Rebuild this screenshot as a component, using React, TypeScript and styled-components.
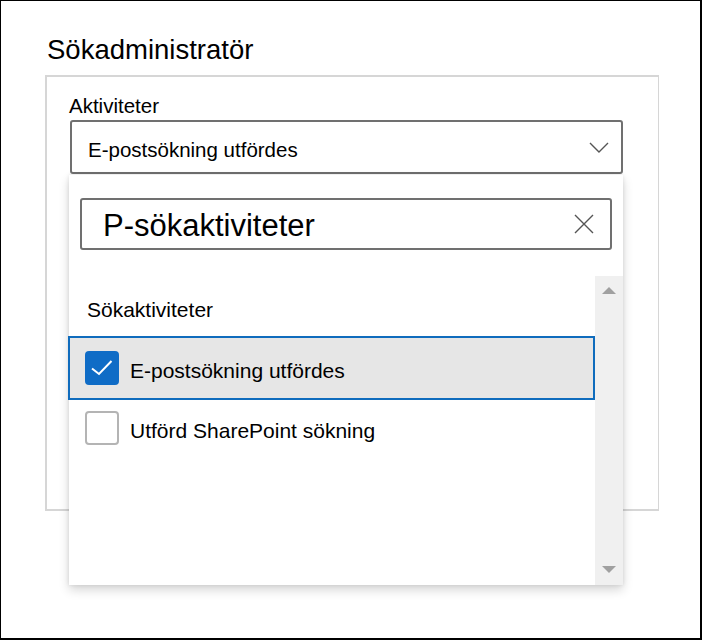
import React from 'react';
import styled, { createGlobalStyle } from 'styled-components';

const GlobalStyle = createGlobalStyle`
  body {
    margin: 0;
    background: #fff;
    font-family: "Liberation Sans", Arial, sans-serif;
    color: #111;
  }
`;

const items = [
  { label: 'E-postsökning utfördes', checked: true },
  { label: 'Utförd SharePoint sökning', checked: false },
];

export default function App() {
  return (
    <>
      <GlobalStyle />
      <Frame>
        <Title>Sökadministratör</Title>
        <Panel>
          <FieldLabel>Aktiviteter</FieldLabel>
          <DropdownWrap>
            <Dropdown>
              <DropdownText>E-postsökning utfördes</DropdownText>
              <svg width="20" height="11" viewBox="0 0 20 11">
                <polyline points="1,1 10,10 19,1" fill="none" stroke="#555" strokeWidth="1.4" />
              </svg>
            </Dropdown>
            <Callout>
              <SearchBox>
                <SearchText>P-sökaktiviteter</SearchText>
                <svg width="20" height="20" viewBox="0 0 20 20">
                  <path d="M1 1 L19 19 M19 1 L1 19" stroke="#555" strokeWidth="1.4" fill="none" />
                </svg>
              </SearchBox>
              <ListArea>
                <List>
                  <GroupHeader>Sökaktiviteter</GroupHeader>
                  {items.map((item) => (
                    <Row key={item.label} selected={item.checked}>
                      <Checkbox checked={item.checked}>
                        {item.checked && (
                          <svg width="34" height="34" viewBox="0 0 34 34">
                            <polyline points="7,17.5 14,23 26.5,10" fill="none" stroke="#fff" strokeWidth="2" />
                          </svg>
                        )}
                      </Checkbox>
                      <RowText>{item.label}</RowText>
                    </Row>
                  ))}
                </List>
                <Scrollbar>
                  <svg width="14" height="7" viewBox="0 0 14 7">
                    <polygon points="0,7 7,0 14,7" fill="#a0a0a0" />
                  </svg>
                  <svg width="14" height="7" viewBox="0 0 14 7">
                    <polygon points="0,0 14,0 7,7" fill="#a0a0a0" />
                  </svg>
                </Scrollbar>
              </ListArea>
            </Callout>
          </DropdownWrap>
        </Panel>
      </Frame>
    </>
  );
}

const Frame = styled.div`
  width: 702px;
  height: 640px;
  box-sizing: border-box;
  border: 2px solid #000;
  border-top-width: 1px;
  border-left-width: 1px;
  padding: 33px 0 0 44px;
  overflow: hidden;
`;

const Title = styled.div`
  font-size: 27.5px;
  line-height: 32px;
  color: #000;
  padding-left: 2px;
`;

const Panel = styled.div`
  margin-top: 9px;
  width: 614px;
  height: 436px;
  box-sizing: border-box;
  border: 2px solid #d6d6d6;
  border-right-width: 1px;
  padding: 17px 35px 0 22px;
`;

const FieldLabel = styled.div`
  font-size: 20.5px;
  line-height: 24px;
  color: #000;
`;

const DropdownWrap = styled.div`
  position: relative;
  margin-top: 2px;
  margin-left: 1px;
`;

const Dropdown = styled.div`
  height: 54px;
  box-sizing: border-box;
  border: 2px solid #707070;
  border-radius: 3px;
  display: flex;
  align-items: center;
  justify-content: space-between;
  padding: 6px 12px 0 16px;
  svg {
    margin-top: -6px;
  }
`;

const DropdownText = styled.span`
  font-size: 20.5px;
  line-height: 24px;
  color: #000;
`;

const Callout = styled.div`
  position: absolute;
  top: 55px;
  left: -1px;
  width: 554px;
  height: 410px;
  background: #fff;
  box-shadow: 0 5px 10px rgba(0, 0, 0, 0.16), 0 0 4px rgba(0, 0, 0, 0.1);
  display: flex;
  flex-direction: column;
  padding-top: 23px;
  box-sizing: border-box;
`;

const SearchBox = styled.div`
  margin: 0 11px;
  height: 52px;
  box-sizing: border-box;
  border: 2px solid #707070;
  border-radius: 3px;
  display: flex;
  align-items: center;
  justify-content: space-between;
  padding: 4px 16px 0 21px;
  svg {
    margin-top: -4px;
  }
`;

const SearchText = styled.span`
  font-size: 31px;
  line-height: 34px;
  color: #000;
`;

const ListArea = styled.div`
  margin-top: 26px;
  flex: 1;
  display: flex;
`;

const List = styled.div`
  flex: 1;
  padding-top: 22px;
`;

const GroupHeader = styled.div`
  font-size: 21px;
  line-height: 24px;
  color: #000;
  padding-left: 18px;
  margin-bottom: 16px;
`;

const Row = styled.div<{ selected?: boolean }>`
  height: 60px;
  margin: 0 2px 0 1px;
  display: flex;
  align-items: center;
  padding-left: 15px;
  gap: 11px;
  background: ${(p) => (p.selected ? '#e6e6e6' : 'transparent')};
  outline: ${(p) => (p.selected ? '2px solid #0f6cbd' : 'none')};
`;

const Checkbox = styled.div<{ checked?: boolean }>`
  width: 34px;
  height: 34px;
  box-sizing: border-box;
  border-radius: 4px;
  background: ${(p) => (p.checked ? '#0f6cc6' : '#fff')};
  border: ${(p) => (p.checked ? 'none' : '2px solid #b4b4b4')};
  display: flex;
  flex-shrink: 0;
`;

const RowText = styled.span`
  font-size: 21px;
  line-height: 24px;
  color: #000;
  padding-top: 5px;
`;

const Scrollbar = styled.div`
  width: 28px;
  background: #f0f0f0;
  display: flex;
  flex-direction: column;
  justify-content: space-between;
  align-items: center;
  padding: 11px 0 12px;
`;
